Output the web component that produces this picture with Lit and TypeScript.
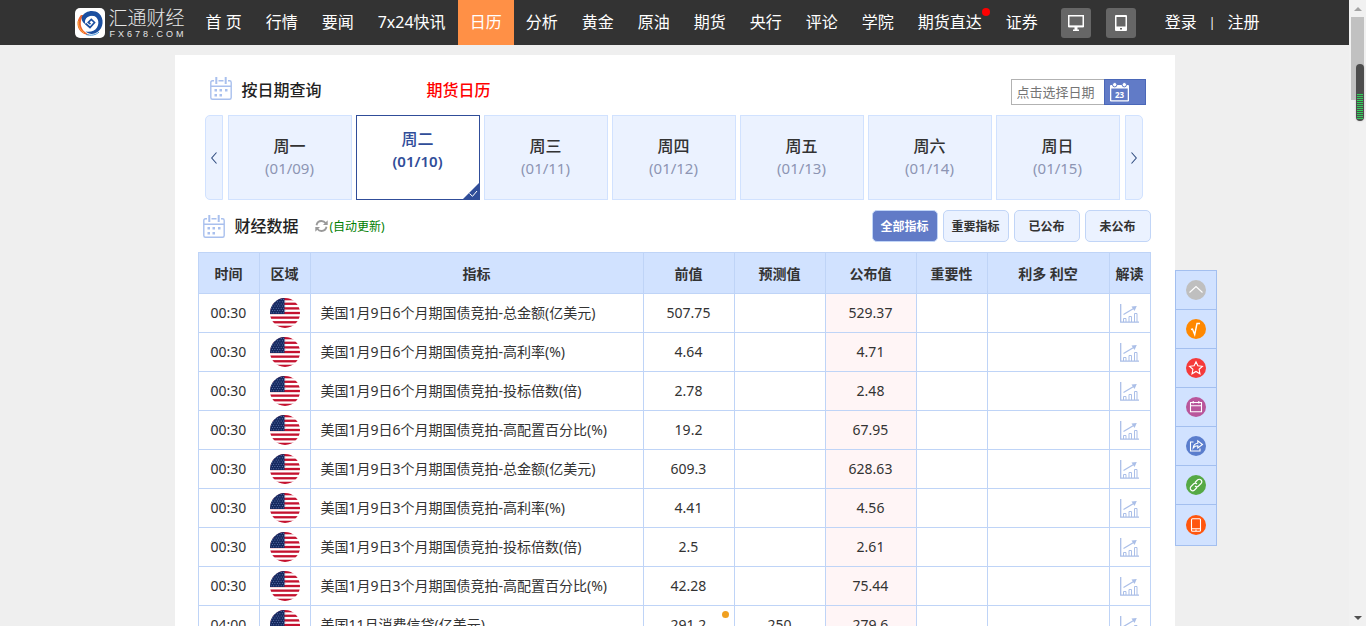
import { LitElement, html, svg, css } from "lit";
import { customElement, property } from "lit/decorators.js";
import { classMap } from "lit/directives/class-map.js";

const NAV = ["首 页", "行情", "要闻", "7x24快讯", "日历", "分析", "黄金", "原油", "期货", "央行", "评论", "学院", "期货直达", "证券"];

const DAYS = [
  ["周一", "01/09"], ["周二", "01/10"], ["周三", "01/11"], ["周四", "01/12"],
  ["周五", "01/13"], ["周六", "01/14"], ["周日", "01/15"],
];

const FILTERS = ["全部指标", "重要指标", "已公布", "未公布"];

interface Row { time: string; name: string; prev: string; forecast: string; actual: string; revised?: boolean; }

const ROWS: Row[] = [
  { time: "00:30", name: "美国1月9日6个月期国债竞拍-总金额(亿美元)", prev: "507.75", forecast: "", actual: "529.37" },
  { time: "00:30", name: "美国1月9日6个月期国债竞拍-高利率(%)", prev: "4.64", forecast: "", actual: "4.71" },
  { time: "00:30", name: "美国1月9日6个月期国债竞拍-投标倍数(倍)", prev: "2.78", forecast: "", actual: "2.48" },
  { time: "00:30", name: "美国1月9日6个月期国债竞拍-高配置百分比(%)", prev: "19.2", forecast: "", actual: "67.95" },
  { time: "00:30", name: "美国1月9日3个月期国债竞拍-总金额(亿美元)", prev: "609.3", forecast: "", actual: "628.63" },
  { time: "00:30", name: "美国1月9日3个月期国债竞拍-高利率(%)", prev: "4.41", forecast: "", actual: "4.56" },
  { time: "00:30", name: "美国1月9日3个月期国债竞拍-投标倍数(倍)", prev: "2.5", forecast: "", actual: "2.61" },
  { time: "00:30", name: "美国1月9日3个月期国债竞拍-高配置百分比(%)", prev: "42.28", forecast: "", actual: "75.44" },
  { time: "04:00", name: "美国11月消费信贷(亿美元)", prev: "291.2", forecast: "250", actual: "279.6", revised: true },
];

const base = css`
  * { box-sizing: border-box; }
  a { color: inherit; text-decoration: none; }
  button { font: inherit; color: inherit; padding: 0; margin: 0; cursor: pointer; }
  svg { display: block; flex: none; }
`;

const calendarIcon = html`<svg width="22" height="23" viewBox="0 0 22 23" fill="none" stroke="#a9c0ee" stroke-width="1.4">
  <path d="M4 3.7H2.5Q.8 3.7.8 5.4V20.4Q.8 22.2 2.5 22.2H19.5Q21.2 22.2 21.2 20.4V5.4Q21.2 3.7 19.5 3.7H18M8.500 3.700H13.500M.8 9.200H21.200"/>
  <path stroke-width="2" d="M6.300 0V7M15.700 0V7"/>
  <path stroke="none" fill="#a9c0ee" d="M9.500 12h2.500v2.500H9.500zM15 12h2.500v2.500H15zM4.500 12H7v2.500H4.500zM4.500 17H7v2.500H4.500zM9.500 17h2.500v2.500H9.500z"/>
</svg>`;

@customElement("site-header")
class SiteHeader extends LitElement {
  static styles = [base, css`
    :host { display: block; background: #333; color: #fff; }
    .inner { max-width: 1200px; height: 45px; margin: 0 auto; display: flex; align-items: center; }
    .logo { display: flex; align-items: center; gap: 4px; margin-right: 9px; }
    .brand { display: flex; flex-direction: column; color: #e6e6e6; white-space: nowrap; width: 76px; }
    .cn { font-size: 19px; line-height: 22px; font-weight: 300; }
    .en { font-size: 9px; line-height: 10px; letter-spacing: 3px; font-family: "Liberation Sans", sans-serif; padding-left: 1px; }
    nav { display: flex; height: 100%; }
    .item { position: relative; padding: 0 12px; line-height: 45px; font-size: 16px; white-space: nowrap; }
    .item.on { background: #ff9046; }
    .dot { position: absolute; top: 8px; right: 4px; width: 8px; height: 8px; border-radius: 50%; background: red; }
    .tools { display: flex; gap: 15px; margin-left: 11px; }
    .tool { width: 30px; height: 30px; border-radius: 3px; background: #666; display: grid; place-items: center; }
    .user { display: flex; align-items: center; gap: 12px; margin-left: 29px; font-size: 16px; line-height: 45px; white-space: nowrap; }
    .bar { font-size: 12px; }
  `];
  render() {
    return html`<header class="inner">
      <a class="logo" href="#">
        <svg width="30" height="30" viewBox="0 0 30 30" fill="none">
          <rect width="30" height="30" rx="5" fill="#fff"/>
          <path fill="#f0652c" d="M5.500 7.500C1 13 1.500 21 7.500 25C10 26.500 12 27 14.500 27C9.500 24.500 5.500 20.500 5.800 15C6 12 6.500 9.500 8.500 7.500C7.500 7 6.500 6.800 5.500 7.500Z"/>
          <path stroke="#fbb040" d="M3.200 13C3 18 5 22 9 25"/>
          <path fill="#1b4fa0" d="M7 8.500C10 3 18.500 1 24 5.500C29.500 10.500 28.500 20 22.500 24C18.500 26.800 14 26.500 10.500 23.500C15 24.500 19.500 23.500 22 19.500C25 14.500 23 8.500 17.500 7.500C12 6.700 8.800 11 9.500 15.500C7 13.500 6 11 7 8.500Z"/>
          <path fill="#1b4fa0" d="M8 9C12 5 20 5 23.500 10C20 7 15 7 12 9.500C9.500 11.500 9.800 14.500 10.500 16.500C8 15 7 12 8 9Z"/>
          <path stroke="#1b4fa0" stroke-width="1.700" d="M10.500 15.500L15 19.500L19.500 14.500L16.300 11.500L13.300 14.500L15.500 16.200"/>
          <path stroke="#3d8fd6" d="M11 26.500C16 28 21 27 24 24"/>
        </svg>
        <span class="brand"><span class="cn">汇通财经</span><span class="en">FX678.COM</span></span>
      </a>
      <nav>${NAV.map((n) => html`<a href="#" class=${classMap({ item: true, on: n === "日历" })}>${n}${n === "期货直达" ? html`<i class="dot"></i>` : ""}</a>`)}</nav>
      <div class="tools">
        <a class="tool" href="#" aria-label="电脑版"><svg width="16" height="16" viewBox="0 0 16 16"><path fill="none" stroke="#fff" stroke-width="1.500" d="M.75.75H15.250V11.500H.75Z"/><path fill="#fff" d="M1 10.500H15V12.200H1zM6.500 12H9.500V14.500H11V16H5V14.500H6.500z"/></svg></a>
        <a class="tool" href="#" aria-label="手机版"><svg width="12" height="16" viewBox="0 0 12 16"><path fill="#fff" fill-rule="evenodd" d="M1 0H11Q12 0 12 1V15Q12 16 11 16H1Q0 16 0 15V1Q0 0 1 0ZM1.500 2V11.500H10.500V2ZM5 13V14.500H7V13Z"/></svg></a>
      </div>
      <div class="user"><a href="#">登录</a><span class="bar">|</span><a href="#">注册</a></div>
    </header>`;
  }
}

@customElement("date-picker-panel")
class DatePickerPanel extends LitElement {
  static styles = [base, css`
    :host { display: block; }
    .top { display: flex; align-items: flex-start; padding: 0 29px 0 35px; margin-bottom: 10px; }
    .title { display: flex; align-items: flex-start; margin-top: -2px; }
    h2 { margin: 0 0 0 10px; font-size: 16px; line-height: 26px; font-weight: 500; color: #222; }
    .futures { margin-left: 105px; font-size: 16px; line-height: 26px; font-weight: 500; color: red; }
    .field { display: flex; margin-left: auto; }
    input { width: 93px; height: 26px; border: 1px solid #b2b2b2; border-right: 0; padding: 0 5px; font: 13px "Noto Sans", "Noto Sans CJK SC", sans-serif; background: #fff; outline: 0; }
    input::placeholder { color: #757575; opacity: 1; }
    .open { width: 42px; height: 26px; border: 1px solid #4a67b8; background: #617bc7; padding-left: 5px; }
    .strip { display: flex; gap: 5px; padding: 0 32px 0 30px; height: 85px; }
    .step { width: 18px; border: 1px solid #d1e2ff; background: #ebf2ff; display: grid; place-items: center; }
    .prev { border-radius: 5px 0 0 5px; }
    .next { border-radius: 0 5px 5px 0; }
    .days { flex: 1; display: grid; grid-template-columns: repeat(7, 1fr); gap: 4px; }
    .day { position: relative; border: 1px solid #d1e2ff; background: #ebf2ff; color: #8d95b3; padding-bottom: 2px; display: flex; flex-direction: column; align-items: center; justify-content: center; }
    .week { font-size: 16px; line-height: 22px; font-weight: 500; color: #333; }
    .date { font-size: 15px; line-height: 22px; }
    .day.on { background: #fff; border-color: #304d99; color: #304d99; padding-bottom: 16px; }
    .on .week { color: #304d99; }
    .on .date { font-weight: 600; }
    .tick { position: absolute; right: 0; bottom: 0; }
  `];
  render() {
    return html`
      <div class="top">
        <div class="title">
          ${calendarIcon}
          <h2>按日期查询</h2>
          <a class="futures" href="#">期货日历</a>
        </div>
        <div class="field">
          <input type="text" aria-label="点击选择日期" placeholder="点击选择日期" />
          <button class="open" aria-label="打开日历"><svg width="19" height="20" viewBox="0 0 19 20"><path fill="#fff" fill-rule="evenodd" d="M1 3H18Q19 3 19 4V18.500Q19 19.500 18 19.500H1Q0 19.500 0 18.500V4Q0 3 1 3ZM1.300 6.500V18.200H17.700V6.500Z"/><circle cx="4.700" cy="2.700" r="2.200" fill="#fff" stroke="#617bc7"/><circle cx="14.300" cy="2.700" r="2.200" fill="#fff" stroke="#617bc7"/><text x="9.500" y="15.500" text-anchor="middle" fill="#fff" font-size="8" font-weight="700" font-family="Noto Sans, sans-serif">23</text></svg></button>
        </div>
      </div>
      <div class="strip">
        <button class="step prev" aria-label="上一周"><svg width="6" height="12" viewBox="0 0 6 12"><path d="M5.500.5L.7 6L5.500 11.500" fill="none" stroke="#304d80" stroke-width="1.100"/></svg></button>
        <div class="days">
          ${DAYS.map(([w, d], i) => html`<button class=${classMap({ day: true, on: i === 1 })}>
            <span class="week">${w}</span><span class="date">(${d})</span>
            ${i === 1 ? html`<svg class="tick" width="16" height="16" viewBox="0 0 16 16"><path fill="#304d99" d="M16 0V16H0Z"/><path fill="none" stroke="#fff" d="M6.500 10.500L9.500 13.300L14 8"/></svg>` : ""}
          </button>`)}
        </div>
        <button class="step next" aria-label="下一周"><svg width="6" height="12" viewBox="0 0 6 12"><path d="M.5.5L5.300 6L.5 11.500" fill="none" stroke="#304d80" stroke-width="1.100"/></svg></button>
      </div>`;
  }
}

const flag = (() => {
  const stripes = [0, 2, 4, 6, 8, 10, 12].map((i) => svg`<rect y=${i * 2.31} width="30" height="2.310" fill="#c4122f"/>`);
  const stars = [];
  for (let y = 0; y < 7; y++) for (let x = 0; x < 6; x++) stars.push(svg`<circle cx=${1.2 + x * 2.5 + (y % 2) * 1.2} cy=${1.5 + y * 2.2} r=".5" fill="#6f87bd"/>`);
  return html`<svg class="flag" width="30" height="30" viewBox="0 0 30 30"><defs><clipPath id="round"><circle cx="15" cy="15" r="15"/></clipPath></defs><g clip-path="url(#round)"><rect width="30" height="30" fill="#fff"/>${stripes}<rect width="14.500" height="16" fill="#15285f"/>${stars}</g></svg>`;
})();

const chart = html`<svg width="19" height="19" viewBox="0 0 19 19" fill="none" stroke="#abbfe8"><path d="M.7 0V18.200H19" stroke-width="1.300"/><path d="M3.500 18V14.500H6V18M9 18V12.500H11.500V18M14.500 18V9.500H17V18"/><path d="M3.500 10.500L14 4.200" stroke-width="1.300"/><path fill="#abbfe8" stroke="none" d="M11.500 2.500L16.800 2L14.500 7Z"/></svg>`;

@customElement("data-panel")
class DataPanel extends LitElement {
  @property({ type: Array }) rows: Row[] = ROWS;
  static styles = [base, css`
    :host { display: block; padding: 10px 24px 0 23px; }
    .head { display: flex; align-items: center; height: 32px; padding-left: 5px; margin-bottom: 10px; }
    h2 { margin: 0 16px 0 10px; font-size: 16px; line-height: 24px; font-weight: 500; color: #222; }
    .refresh { display: flex; align-items: center; gap: 2px; color: green; font-size: 12px; border: 0; background: none; }
    .filters { display: flex; gap: 5px; margin-left: auto; }
    .filter { width: 66px; height: 32px; border: 1px solid #c1d5f7; border-radius: 5px; background: #ebf2ff; font-size: 12px; font-weight: 700; color: #333; }
    .filter.on { background: #617bc7; color: #fff; }
    table { width: 100%; border-collapse: collapse; table-layout: fixed; font-size: 14px; line-height: 20px; color: #333; }
    th, td { box-sizing: content-box; border: 1px solid #bfd4f7; padding: 0; text-align: center; font-weight: 400; }
    th { height: 38px; padding-top: 2px; background: #d1e2ff; font-weight: 700; }
    td { height: 38px; white-space: nowrap; }
    .time { width: 60px; }
    .area { width: 50px; }
    .value { width: 90px; }
    .level { width: 70px; }
    .trend { width: 121px; }
    .read { width: 40px; }
    td.name { text-align: left; padding-left: 10px; }
    .actual { background: #fff5f6; }
    .prev { position: relative; }
    .mark { position: absolute; top: 5px; right: 5px; width: 7px; height: 7px; border-radius: 50%; background: #f0a020; }
    td svg { margin: 0 auto; }
  `];
  render() {
    return html`
      <div class="head">
        ${calendarIcon}
        <h2>财经数据</h2>
        <button class="refresh"><svg width="13" height="12" viewBox="0 0 13 12" fill="none" stroke="#999" stroke-width="1.800"><path d="M1.500 5.200C2 2.700 4 1 6.500 1C8.300 1 9.700 1.800 10.800 3.200M11.500 6.800C11 9.300 9 11 6.500 11C4.700 11 3.300 10.200 2.200 8.800"/><path fill="#999" stroke="none" d="M12.700.3V5H8ZM.3 11.700V7H5Z"/></svg>(自动更新)</button>
        <div class="filters">${FILTERS.map((f, i) => html`<button class=${classMap({ filter: true, on: i === 0 })}>${f}</button>`)}</div>
      </div>
      <table>
        <thead><tr>
          <th class="time">时间</th><th class="area">区域</th><th>指标</th><th class="value">前值</th><th class="value">预测值</th>
          <th class="value">公布值</th><th class="level">重要性</th><th class="trend">利多 利空</th><th class="read">解读</th>
        </tr></thead>
        <tbody>${this.rows.map((r) => html`<tr>
          <td>${r.time}</td><td>${flag}</td><td class="name">${r.name}</td>
          <td class="prev">${r.prev}${r.revised ? html`<i class="mark"></i>` : ""}</td>
          <td>${r.forecast}</td><td class="actual">${r.actual}</td><td></td><td></td><td>${chart}</td>
        </tr>`)}</tbody>
      </table>`;
  }
}

const SIDE = [
  { label: "返回顶部", color: "#bfbfbf", shape: svg`<path d="M3.500 12.500L10 6.500L16.500 12.500"/>` },
  { label: "签到", color: "#ff8800", shape: svg`<path d="M5 10.500L6.500 10L8.700 15.500L11 4.500H14" stroke-width="1.400"/>` },
  { label: "收藏", color: "#f53a3a", shape: svg`<path d="M10 3.700L11.900 7.800L16.400 8.300L13.100 11.300L14 15.800L10 13.500L6 15.800L6.900 11.300L3.600 8.300L8.100 7.800Z"/>` },
  { label: "日历", color: "#b9569b", shape: svg`<path d="M4.500 5.500H15.500V14.800H4.500ZM4.500 8.700H15.500M7.200 4V6.500M12.800 4V6.500"/>` },
  { label: "分享", color: "#5a7dcd", shape: svg`<path d="M7.500 6H4.500V15H14V12.500M7.200 12C7.500 8.700 9.300 7.300 11.800 7.200V4.800L16.500 8.500L11.800 12V9.800C9.700 9.800 8.300 10.500 7.200 12Z"/>` },
  { label: "链接", color: "#55a945", shape: svg`<path d="M9 7.500L11.500 5C12.500 4 14 4 15 5S16 7.500 15 8.500L12.500 11C11.500 12 10 12 9 11M11 12.500L8.500 15C7.500 16 6 16 5 15S4 12.500 5 11.500L7.500 9C8.500 8 10 8 11 9"/>` },
  { label: "手机", color: "#ff560f", shape: svg`<rect x="5.500" y="3.700" width="9" height="12.600" rx="1"/><path d="M5.500 13.800H14.500M9.300 15.200H10.700"/>` },
];

@customElement("side-tools")
class SideTools extends LitElement {
  static styles = [base, css`
    :host { display: flex; flex-direction: column; width: 42px; border: 1px solid #a3bfef; background: #d1e2ff; }
    .tool { height: 39px; border-bottom: 1px solid #a3bfef; display: grid; place-items: center; }
    .tool:last-child { height: 40px; border-bottom: 0; }
  `];
  render() {
    return SIDE.map((s) => html`<a class="tool" href="#" aria-label=${s.label}><svg width="20" height="20" viewBox="0 0 20 20" fill="none" stroke="#fff" stroke-width="1.100"><circle cx="10" cy="10" r="10" fill=${s.color} stroke="none"/>${s.shape}</svg></a>`);
  }
}

@customElement("scroll-rail")
class ScrollRail extends LitElement {
  static styles = [base, css`
    :host { display: flex; flex-direction: column; align-items: center; width: 17px; background: #f1f1f1; position: relative; }
    .end { height: 17px; display: grid; place-items: center; }
    .track { flex: 1; width: 13px; }
    .thumb { height: 83px; background: #c1c1c1; }
    .meter { position: absolute; top: 64px; right: 2px; width: 8px; height: 57px; border-radius: 4px; background: #4d4d4d; padding: 30px 1px 2px; box-shadow: 0 0 2px #bbb; }
    .level { height: 25px; background: repeating-linear-gradient(#2fd158 0 1px, #4d4d4d 1px 2px); }
  `];
  render() {
    return html`
      <span class="end"><svg width="8" height="4"><path fill="#a3a3a3" d="M0 4L4 0L8 4Z"/></svg></span>
      <div class="track"><div class="thumb"></div></div>
      <span class="end"><svg width="8" height="4"><path fill="#505050" d="M0 0L4 4L8 0Z"/></svg></span>
      <div class="meter"><div class="level"></div></div>`;
  }
}

@customElement("app-root")
class AppRoot extends LitElement {
  static styles = [base, css`
    :host { display: flex; height: 100vh; overflow: hidden; background: #efefef; font-family: "Noto Sans", "Noto Sans CJK SC", sans-serif; }
    .page { position: relative; flex: 1; min-width: 0; overflow: hidden; }
    main { max-width: 1000px; min-height: 100%; margin: 10px auto 0; padding-top: 24px; background: #fff; }
    side-tools { position: absolute; top: 270px; left: calc(50% + 500px); }
  `];
  render() {
    return html`
      <div class="page">
        <site-header></site-header>
        <main>
          <date-picker-panel></date-picker-panel>
          <data-panel></data-panel>
        </main>
        <side-tools></side-tools>
      </div>
      <scroll-rail></scroll-rail>`;
  }
}
